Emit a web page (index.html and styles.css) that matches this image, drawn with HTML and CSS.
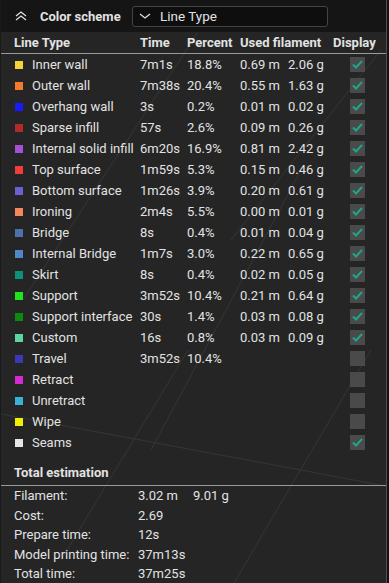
FILE: index.html
```html
<!DOCTYPE html>
<html lang="en">
<head>
  <meta charset="UTF-8" />
  <title>Color scheme</title>
  <link rel="stylesheet" href="styles.css">
</head>
<body>
  <div class="panel">
    <!-- faint build plate grid seen through the panel -->
    <svg class="grid" width="385" height="583" viewBox="0 0 385 583">
      <g stroke="#363636" stroke-width="1" fill="none">
        <path d="M197 32 L22 300"/>
        <path d="M380 50 L230 240"/>
        <path d="M300 170 L150 450"/>
        <path d="M187 350 L60 560"/>
        <path d="M370 350 L233 583"/>
        <path d="M0 414 L300 470 L389 487"/>
      </g>
    </svg>

    <div class="scheme">
      <svg class="collapse" width="12" height="10" viewBox="0 0 12 10">
        <path d="M1 5 L6 1 L11 5 M1 9 L6 5 L11 9" fill="none" stroke="#e0e0e0" stroke-width="1.3"/>
      </svg>
      <span class="scheme-title">Color scheme</span>
      <div class="select">
        <svg width="12" height="8" viewBox="0 0 12 8">
          <path d="M1 2 L6 6 L11 2" fill="none" stroke="#e0e0e0" stroke-width="1.3"/>
        </svg>
        <span>Line Type</span>
      </div>
    </div>

    <div class="table">
      <div class="row head">
        <span>Line Type</span>
        <span>Time</span>
        <span>Percent</span>
        <span class="span2">Used filament</span>
        <span>Display</span>
      </div>
      <div id="rows"></div>
    </div>

    <div class="totals">
      <div class="totals-title">Total estimation</div>
      <div class="trow"><span>Filament:</span><span>3.02 m</span><span>9.01 g</span></div>
      <div class="trow"><span>Cost:</span><span>2.69</span></div>
      <div class="trow"><span>Prepare time:</span><span>12s</span></div>
      <div class="trow"><span>Model printing time:</span><span>37m13s</span></div>
      <div class="trow"><span>Total time:</span><span>37m25s</span></div>
    </div>
  </div>

  <script>
    const lines = [
      ["Inner wall", "#f5d33b", "7m1s", "18.8%", "0.69 m", "2.06 g", true],
      ["Outer wall", "#f57a2e", "7m38s", "20.4%", "0.55 m", "1.63 g", true],
      ["Overhang wall", "#1a1aff", "3s", "0.2%", "0.01 m", "0.02 g", true],
      ["Sparse infill", "#b02a2a", "57s", "2.6%", "0.09 m", "0.26 g", true],
      ["Internal solid infill", "#a352d8", "6m20s", "16.9%", "0.81 m", "2.42 g", true],
      ["Top surface", "#f03c3c", "1m59s", "5.3%", "0.15 m", "0.46 g", true],
      ["Bottom surface", "#6b5fd6", "1m26s", "3.9%", "0.20 m", "0.61 g", true],
      ["Ironing", "#f5875e", "2m4s", "5.5%", "0.00 m", "0.01 g", true],
      ["Bridge", "#4c6fb0", "8s", "0.4%", "0.01 m", "0.04 g", true],
      ["Internal Bridge", "#4f86cc", "1m7s", "3.0%", "0.22 m", "0.65 g", true],
      ["Skirt", "#0d8f7a", "8s", "0.4%", "0.02 m", "0.05 g", true],
      ["Support", "#1ee61e", "3m52s", "10.4%", "0.21 m", "0.64 g", true],
      ["Support interface", "#0f8a0f", "30s", "1.4%", "0.03 m", "0.08 g", true],
      ["Custom", "#5ed69b", "16s", "0.8%", "0.03 m", "0.09 g", true],
      ["Travel", "#3a3ab8", "3m52s", "10.4%", "", "", false],
      ["Retract", "#d42ad4", "", "", "", "", false],
      ["Unretract", "#3bb0d6", "", "", "", "", false],
      ["Wipe", "#f0f000", "", "", "", "", false],
      ["Seams", "#e6e6e6", "", "", "", "", true]
    ];

    const tick = '<svg width="11" height="9" viewBox="0 0 11 9"><path d="M1 4.5 L4 7.5 L10 1" fill="none" stroke="#1fa58a" stroke-width="2"/></svg>';

    let html = "";
    for (const l of lines) {
      html += `<div class="row">
        <span class="name"><i class="swatch" style="background:${l[1]}"></i>${l[0]}</span>
        <span>${l[2]}</span>
        <span>${l[3]}</span>
        <span>${l[4]}</span>
        <span>${l[5]}</span>
        <span class="check">${l[6] ? tick : ""}</span>
      </div>`;
    }
    document.getElementById("rows").innerHTML = html;
  </script>
</body>
</html>
```

FILE: styles.css
```css
body {
  margin: 0;
  background-color: #121212;
  font-family: Roboto, Arial, sans-serif;
  font-size: 13px;
  color: #e2e2e2;
}

.panel {
  position: relative;
  width: 385px;
  height: 583px;
  background-color: #252525;
  border-left: 1px solid #1a1a1a;
  border-right: 1px solid #505050;
}

.grid {
  position: absolute;
  top: 0;
  left: 0;
}

.scheme,
.table,
.totals {
  position: relative;
}

.scheme {
  display: flex;
  align-items: center;
  height: 32px;
  padding-left: 14px;
  background-color: #151515;
}

.collapse {
  margin-right: 13px;
}

.scheme-title {
  width: 92px;
  font-weight: bold;
}

.select {
  display: flex;
  align-items: center;
  gap: 9px;
  width: 188px;
  height: 19px;
  padding-left: 6px;
  border: 1px solid #444;
  border-radius: 3px;
  background-color: #0e0e0e;
  font-size: 13.5px;
}

.row {
  display: grid;
  grid-template-columns: 126px 47px 53px 48px 45px 1fr;
  align-items: center;
  height: 21px;
  padding-left: 13px;
  white-space: nowrap;
}

.row.head {
  height: 21px;
  font-weight: bold;
  border-bottom: 1px solid #9a9a9a;
}

.row.head .span2 {
  grid-column: span 2;
}

.name {
  display: flex;
  align-items: center;
}

.swatch {
  display: inline-block;
  width: 8px;
  height: 8px;
  margin: 0 9px 0 1px;
}

.check {
  display: flex;
  align-items: center;
  justify-content: center;
  width: 15px;
  height: 15px;
  margin-left: 17px;
  background-color: #4a4a4a;
}

.totals {
  margin-top: 12px;
}

.totals-title {
  font-weight: bold;
  padding: 0 0 5px 13px;
  border-bottom: 1px solid #9a9a9a;
}

.trow {
  display: grid;
  grid-template-columns: 124px 55px auto;
  height: 19.5px;
  align-items: center;
  padding-left: 13px;
  white-space: nowrap;
}
```
